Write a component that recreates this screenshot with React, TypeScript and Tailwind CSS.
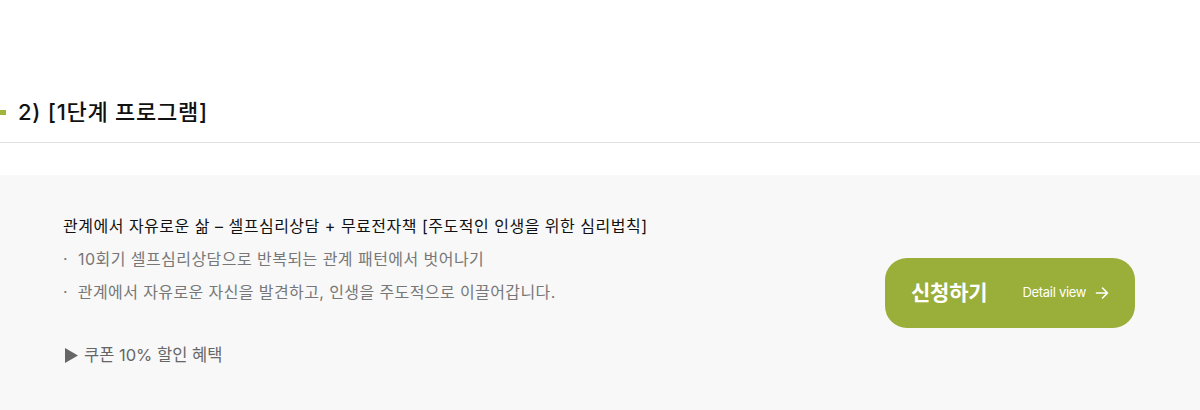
import React from "react";

export default function App() {
  const font = { fontFamily: 'Inter, "Noto Sans CJK KR", sans-serif' };
  return (
    <div className="w-[1200px] h-[410px] bg-white overflow-hidden" style={font}>
      <div className="h-[98px]" />
      <div className="flex items-center h-[28px]">
        <span className="w-[6px] h-[5px] bg-[#a3b43c]" />
        <h2 className="ml-[12px] text-[22px] leading-[28px] font-medium text-[#111] tracking-[0.75px]">
          2) [1단계 프로그램]
        </h2>
      </div>
      <div className="h-[17px] border-b border-[#e2e2e2]" />
      <div className="h-[32px]" />
      <div className="h-[236px] bg-[#f8f8f8] flex items-center justify-between pl-[63px] pr-[65px]">
        <div className="self-start pt-[35px]">
          <p className="text-[16px] leading-[33px] text-[#111] tracking-[0.5px]">
            관계에서 자유로운 삶 – 셀프심리상담 + 무료전자책 [주도적인 인생을 위한 심리법칙]
          </p>
          <p className="text-[16px] leading-[33px] text-[#777] tracking-[0.45px]">
            ·&nbsp; 10회기 셀프심리상담으로 반복되는 관계 패턴에서 벗어나기
          </p>
          <p className="text-[16px] leading-[33px] text-[#777] tracking-[0.4px]">
            ·&nbsp; 관계에서 자유로운 자신을 발견하고, 인생을 주도적으로 이끌어갑니다.
          </p>
          <p className="mt-[30px] text-[16.5px] leading-[33px] text-[#666] tracking-[0px] flex items-center">
            <svg width="14" height="15" viewBox="0 0 14 15" className="ml-[2px] mr-[5px] mt-[-1px]">
              <polygon points="0,0 13,7.5 0,15" fill="#666" />
            </svg>
            쿠폰 10% 할인 혜택
          </p>
        </div>
        <button className="w-[250px] h-[70px] rounded-[22px] bg-[#9aae3a] flex items-center pl-[26px] text-white">
          <span className="text-[21px] font-bold tracking-[-0.2px]">신청하기</span>
          <span className="ml-[35px] text-[13px] tracking-[-0.3px]">Detail view</span>
          <svg width="14" height="14" viewBox="0 0 14 14" className="ml-[9px]" fill="none" stroke="white" strokeWidth="1.6" strokeLinecap="round" strokeLinejoin="round">
            <path d="M1.5 7h11M7.5 2l5 5-5 5" />
          </svg>
        </button>
      </div>
    </div>
  );
}
